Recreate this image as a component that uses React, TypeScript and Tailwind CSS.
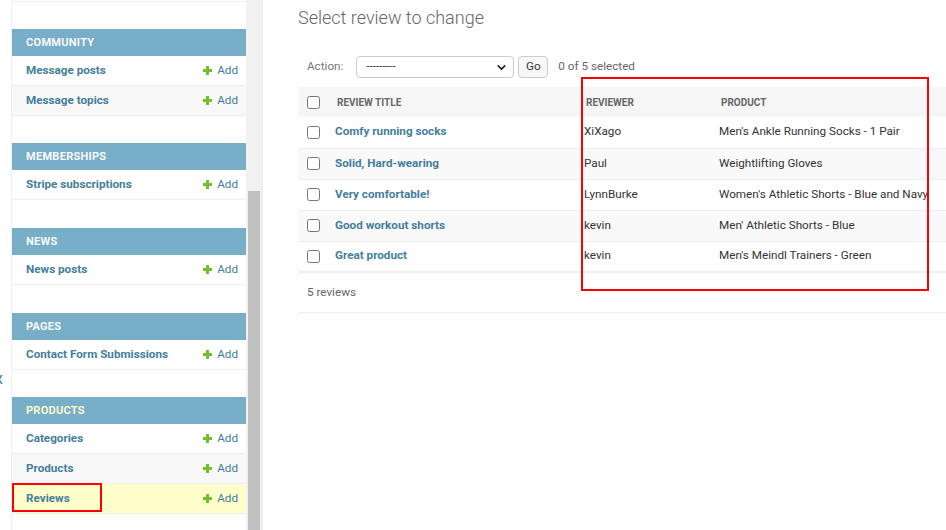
import { ChevronDown } from "lucide-react";
import clsx from "clsx";

type Model = { name: string; current?: boolean };
type Section = { title: string; models: Model[]; current?: boolean; gap: string };

const sections: Section[] = [
  { title: "Community", models: [{ name: "Message posts" }, { name: "Message topics" }], gap: "mb-[27px]" },
  { title: "Memberships", models: [{ name: "Stripe subscriptions" }], gap: "mb-[28px]" },
  { title: "News", models: [{ name: "News posts" }], gap: "mb-[28px]" },
  { title: "Pages", models: [{ name: "Contact Form Submissions" }], gap: "mb-[27px]" },
  {
    title: "Products",
    current: true,
    models: [{ name: "Categories" }, { name: "Products" }, { name: "Reviews", current: true }],
    gap: "mb-[27px]",
  },
];

const reviews = [
  { title: "Comfy running socks", reviewer: "XiXago", product: "Men's Ankle Running Socks - 1 Pair" },
  { title: "Solid, Hard-wearing", reviewer: "Paul", product: "Weightlifting Gloves" },
  { title: "Very comfortable!", reviewer: "LynnBurke", product: "Women's Athletic Shorts - Blue and Navy" },
  { title: "Good workout shorts", reviewer: "kevin", product: "Men' Athletic Shorts - Blue" },
  { title: "Great product", reviewer: "kevin", product: "Men's Meindl Trainers - Green" },
];

function PlusIcon() {
  return (
    <svg width="9" height="9" viewBox="0 0 9 9" className="shrink-0">
      <rect x="3" y="0" width="3" height="9" fill="#70bf2b" />
      <rect x="0" y="3" width="9" height="3" fill="#70bf2b" />
    </svg>
  );
}

function Checkbox() {
  return <span className="block w-[13px] h-[13px] rounded-[2.5px] border border-[#767676] bg-white" />;
}

function Sidebar() {
  return (
    <div className="flex h-full shrink-0">
      <div className="w-[12px] border-r border-[#eee] overflow-hidden flex flex-col">
        <span className="mt-[369px] -ml-[5px] text-[16px] leading-[20px] text-[#447e9b]">x</span>
      </div>
      <div className="w-[234px] flex flex-col bg-white overflow-hidden">
        <div className="shrink-0 h-[2px] border-b border-[#eee]" />
        <div className="shrink-0 h-[27px]" />
        {sections.map((s) => (
          <div key={s.title} className={clsx("shrink-0", s.gap)}>
            <div
              className={clsx(
                "h-[27px] bg-[#79aec8] flex items-center pl-[14px] pt-px text-[11px] font-semibold uppercase tracking-[0.3px]",
                s.current ? "text-[#ffc]" : "text-white"
              )}
            >
              {s.title}
            </div>
            {s.models.map((m, i) => (
              <div
                key={m.name}
                className={clsx(
                  "h-[30px] border-b border-[#eee] flex items-center justify-between pl-[14px] pr-[8px] text-[11.7px]",
                  m.current ? "bg-[#ffffcc]" : i % 2 === 1 ? "bg-[#f8f8f8]" : "bg-white"
                )}
              >
                <span className="font-bold text-[#447e9b]">{m.name}</span>
                <span className="flex items-center gap-[5px] text-[#447e9b]">
                  <PlusIcon />
                  Add
                </span>
              </div>
            ))}
          </div>
        ))}
      </div>
      <div className="w-[16px] bg-[#f1f1f1] flex flex-col pt-[191px] px-[2px]">
        <div className="flex-1 bg-[#c1c1c1]" />
      </div>
      <div className="w-px bg-[#eee]" />
    </div>
  );
}

function ChangeList() {
  return (
    <div className="flex-1 min-w-0 pl-[35px] overflow-hidden">
      <h1 className="mt-[6px] text-[18px] leading-[24px] font-light text-[#666]">Select review to change</h1>

      <div className="mt-[26px] h-[22px] flex items-center pl-[9px] text-[11.7px] text-[#777]">
        <span>Action:</span>
        <div className="ml-[13px] w-[158px] h-[22px] border border-[#ccc] rounded-[4px] flex items-center justify-between pl-[9px] pr-[5px] bg-white">
          <span className="text-[#333]">---------</span>
          <ChevronDown size={13} strokeWidth={3} color="#222" />
        </div>
        <span className="ml-[4px] w-[30px] h-[22px] border border-[#ccc] rounded-[4px] bg-[#f8f8f8] flex items-center justify-center text-[#333]">
          Go
        </span>
        <span className="ml-[10px] text-[#666]">0 of 5 selected</span>
      </div>

      <table className="mt-[9px] w-[700px] border-collapse text-[11.7px]">
        <thead>
          <tr className="h-[30px] bg-[#f6f6f6]">
            <th className="w-[29px] pl-[9px] text-left font-normal">
              <Checkbox />
            </th>
            <th className="w-[249px] pl-[10px] text-left text-[10px] font-bold text-[#666] uppercase">Review title</th>
            <th className="w-[135px] pl-[10px] text-left text-[10px] font-bold text-[#666] uppercase">Reviewer</th>
            <th className="pl-[10px] text-left text-[10px] font-bold text-[#666] uppercase">Product</th>
          </tr>
        </thead>
        <tbody>
          {reviews.map((r, i) => (
            <tr
              key={r.title}
              className={clsx(
                "h-[31px]",
                i === reviews.length - 1 ? "border-b-2" : "border-b",
                "border-[#eee]",
                i % 2 === 1 ? "bg-[#f9f9f9]" : "bg-white"
              )}
            >
              <td className="pl-[9px]">
                <Checkbox />
              </td>
              <td className="pl-[8px] font-bold text-[#447e9b]">{r.title}</td>
              <td className="pl-[8px] text-[#333]">{r.reviewer}</td>
              <td className="pl-[8px] text-[#333] whitespace-nowrap">{r.product}</td>
            </tr>
          ))}
        </tbody>
      </table>

      <div className="h-[40px] border-b border-[#eee] flex items-center pl-[9px] text-[11.7px] text-[#666]">5 reviews</div>
    </div>
  );
}

export default function App() {
  return (
    <div className="relative w-[946px] h-[530px] overflow-hidden bg-white flex font-['Roboto',sans-serif]">
      <Sidebar />
      <ChangeList />
      <div className="absolute left-[581px] top-[77px] w-[348px] h-[214px] border-2 border-[#ff0000]" />
      <div className="absolute left-[12px] top-[483px] w-[90px] h-[29px] border-2 border-[#ff0000]" />
    </div>
  );
}
